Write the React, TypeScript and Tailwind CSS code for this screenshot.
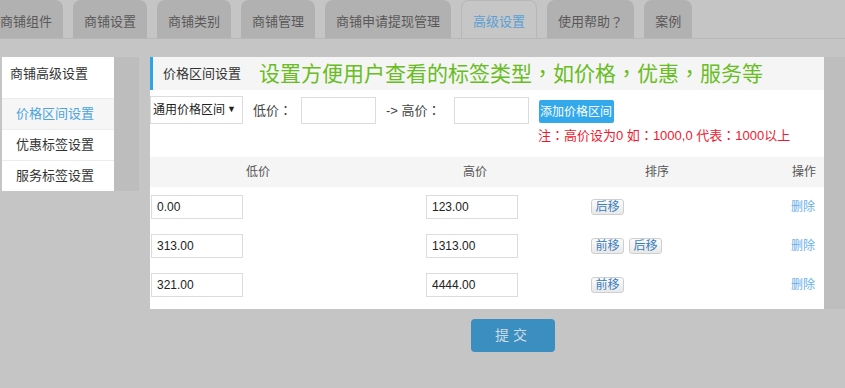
import React from 'react';

const TABS = ['商铺组件', '商铺设置', '商铺类别', '商铺管理', '商铺申请提现管理', '高级设置', '使用帮助', '案例'];
const SIDE = ['价格区间设置', '优惠标签设置', '服务标签设置'];
const ROWS = [
  { low: '0.00', high: '123.00', up: false, down: true },
  { low: '313.00', high: '1313.00', up: true, down: true },
  { low: '321.00', high: '4444.00', up: true, down: false },
];

// full-width punctuation, centred like the original font draws it
function P({ c }: { c: string }) {
  return <span className="font-['Noto_Sans_CJK_TC',sans-serif]">{c}</span>;
}

function SortBtn({ label }: { label: string }) {
  return (
    <span className="inline-flex items-center justify-center w-[33px] h-[16px] rounded-[3px] border border-[#cfcfcf] bg-gradient-to-b from-[#fbfbfb] to-[#e9e9e9] text-[12px] leading-none text-[#3b7dbb]">
      {label}
    </span>
  );
}

export default function App() {
  return (
    <div
      className="w-[845px] h-[388px] overflow-hidden bg-[#c6c5c5] text-[#333]"
      style={{ fontFamily: '"Liberation Sans", "Noto Sans CJK SC", sans-serif' }}
    >
      {/* tabs */}
      <div className="flex gap-[10px] ml-[-11px] h-[38px]">
        {TABS.map((t) => (
          <div
            key={t}
            className={`flex items-center pt-[5px] px-[11px] rounded-t-[8px] text-[13px] ${
              t === '高级设置'
                ? 'bg-[#c7c6c6] border border-b-0 border-[#b8b7b7] text-[#5a9fd4]'
                : 'bg-[#b2b1b1] text-[#595959]'
            }`}
          >
            {t}
            {t === '使用帮助' && <P c="？" />}
          </div>
        ))}
      </div>
      <div className="h-[1px] bg-[#b9b8b8]" />

      <div className="flex mt-[18px]">
        {/* left menu */}
        <div className="flex items-start ml-[2px]">
          <div className="w-[112px] bg-white text-[13px]">
            <div className="h-[33px] flex items-center pl-[8px] text-[#333]">商铺高级设置</div>
            <div className="h-[8px]" />
            {SIDE.map((s, i) => (
              <div
                key={s}
                className={`h-[31px] flex items-center pl-[14px] border-t border-[#ececec] ${
                  i === 0 ? 'bg-[#f6f6f6] text-[#4ba3df]' : 'text-[#333]'
                }`}
              >
                {s}
              </div>
            ))}
          </div>
          <div className="w-[25px] h-[134px] bg-[#bebdbd]" />
        </div>

        {/* main */}
        <div className="ml-[11px] flex flex-col">
          <div className="flex">
            <div className="w-[674px] bg-white pb-[5px]">
              <div className="h-[33px] flex items-center bg-[#f5f5f5] border-l-[3px] border-[#2ca5e7] pl-[10px]">
                <span className="text-[13px] text-[#333]">价格区间设置</span>
                <span className="ml-[18px] text-[21px] text-[#68bd22]">
                  设置方便用户查看的标签类型<P c="，" />如价格<P c="，" />优惠<P c="，" />服务等
                </span>
              </div>

              <div className="mt-[6px] h-[28px] flex items-center text-[13px]">
                <div className="w-[93px] h-[28px] flex items-center justify-between border border-[#dcdcdc] pl-[2px] pr-[6px] text-[12px] text-[#222]">
                  <span>通用价格区间</span>
                  <span className="text-[9px]">▼</span>
                </div>
                <span className="ml-[10px] text-[#444]">低价<P c="：" /></span>
                <div className="ml-[9px] w-[75px] h-[27px] border border-[#dcdcdc]" />
                <span className="ml-[10px] text-[#444]">-&gt; 高价<P c="：" /></span>
                <div className="ml-[13px] w-[75px] h-[27px] border border-[#dcdcdc]" />
                <div className="ml-[10px] mt-[3px] w-[75px] h-[23px] flex items-center justify-center rounded-[2px] bg-[#33a9ec] text-white text-[12px]">
                  添加价格区间
                </div>
              </div>
              <div className="mt-[3px] h-[16px] leading-[16px] pl-[388px] text-[13px] text-[#f0172f]">
                注<P c="：" />高价设为0 如<P c="：" />1000,0 代表<P c="：" />1000以上
              </div>

              <div className="mt-[14px] h-[30px] grid grid-cols-[216px_218px_146px_94px] items-center bg-[#f5f5f5] text-[12px] text-[#555]">
                <div className="text-center">低价</div>
                <div className="text-center">高价</div>
                <div className="text-center">排序</div>
                <div className="text-right pr-[8px]">操作</div>
              </div>

              {ROWS.map((r) => (
                <div key={r.low} className="h-[39px] grid grid-cols-[216px_218px_146px_94px] items-center text-[12px]">
                  <div className="pl-[1px]">
                    <div className="w-[92px] h-[24px] flex items-center pl-[5px] border border-[#dcdcdc] text-[#222]">{r.low}</div>
                  </div>
                  <div className="pl-[60px]">
                    <div className="w-[92px] h-[24px] flex items-center pl-[5px] border border-[#dcdcdc] text-[#222]">{r.high}</div>
                  </div>
                  <div className="pl-[7px] flex gap-[5px]">
                    {r.up && <SortBtn label="前移" />}
                    {r.down && <SortBtn label="后移" />}
                  </div>
                  <div className="text-right pr-[9px] text-[#66aee9]">删除</div>
                </div>
              ))}
            </div>
            <div className="w-[21px] bg-[#bfbebe]" />
          </div>

          <div className="mt-[10px] ml-[321px] w-[84px] h-[33px] flex items-center justify-center rounded-[4px] bg-[#3a8ec0] text-[14px] text-[#cddce6] tracking-[4px]">
            提交
          </div>
        </div>
      </div>
    </div>
  );
}
